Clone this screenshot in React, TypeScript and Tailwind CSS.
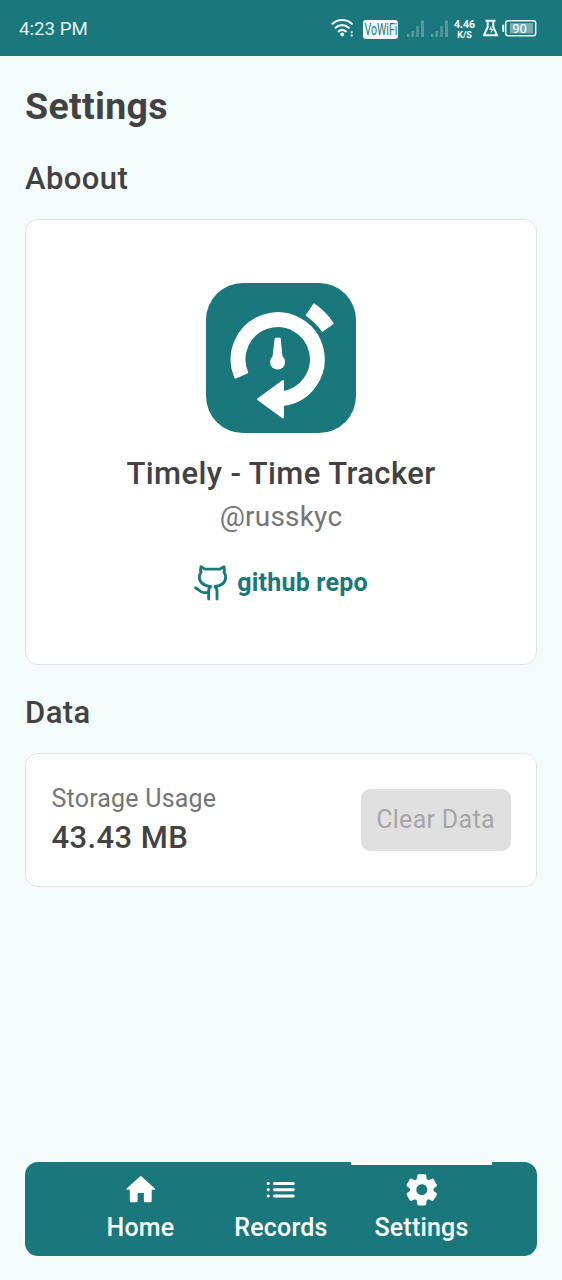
import React from "react";

const font = "font-['Roboto',sans-serif]";

function StatusBar() {
  return (
    <header className="flex h-14 shrink-0 items-center justify-between bg-[#1a787c] pl-[19px] pr-[25px] text-white">
      <span className="pt-px text-[18.7px] leading-6 text-[#e3f1f1]">4:23 PM</span>
      <div className="flex h-6 items-center">
        <svg width="24" height="24" viewBox="331 16 24 24" fill="none" stroke="#f2f8f8" strokeWidth="2.2" strokeLinecap="round">
          <path d="M332.500 23.700a14.500 14.500 0 0 1 19.300 0M335.500 27.700a10 10 0 0 1 13.300 0M338.700 31.300a5.500 5.500 0 0 1 7 0" />
          <circle cx="342.200" cy="34.500" r="1.900" fill="#f2f8f8" stroke="none" />
          <path d="M350.700 31.200h2v2h-2zM350.700 34.500h2v2h-2z" fill="#d5e8e8" stroke="none" />
        </svg>
        <span className="ml-2 mt-0.5 flex h-[19px] w-[35px] items-center justify-center rounded-[3px] bg-[#f5fbfb] text-[#1a787c]">
          <span className="scale-x-[0.66] text-[16px] leading-[19px]">VoWiFi</span>
        </span>
        <svg className="ml-2" width="44" height="24" viewBox="406 16 44 24" fill="#58999c">
          <path d="M407 34h2.500v3H407zM411.500 31h2.500v6h-2.500zM416.300 26h2.500v11h-2.500zM421 20.500h3v16.500h-3z" />
          <path d="M431 34h2.500v3H431zM435.500 31h2.500v6h-2.500zM440.300 26h2.500v11h-2.500zM445 20.500h3v16.500h-3z" />
        </svg>
        <span className="ml-1 flex w-[21px] flex-col items-center pt-0.5 font-bold">
          <span className="text-[10.500px] leading-[11px]">4.46</span>
          <span className="text-[9px] leading-[10px]">K/S</span>
        </span>
        <svg className="ml-2" width="54" height="24" viewBox="483 16 54 24" fill="none" stroke="#f2f8f8">
          <path d="M485.500 20.800h10M487.700 21v6l-3.700 8.300h13l-3.700-8.300v-6" strokeWidth="2" />
          <path d="M491.200 25.500l-2.200 4.300h2.500l-1 4 3.500-5h-2.700z" fill="#f2f8f8" stroke="none" />
          <rect x="505.700" y="20.700" width="30" height="15" rx="2.500" strokeWidth="1.500" />
          <path d="M503.200 25.500v5.500" strokeWidth="2" strokeLinecap="round" />
          <rect x="510" y="23" width="23" height="10.500" fill="#76acae" stroke="none" />
          <text x="519.500" y="33" fill="#fff" stroke="none" fontSize="13" textAnchor="middle">90</text>
        </svg>
      </div>
    </header>
  );
}

function AppLogo() {
  return (
    <svg width="150" height="150" viewBox="0 0 150 150">
      <rect width="150" height="150" rx="37" fill="#1a787c" />
      <path d="M35.500 92.300A39.600 39.600 0 1 1 77 115.500" fill="none" stroke="#fff" strokeWidth="14.800" />
      <path d="M29.400 94.500L41 89.500" stroke="#fff" strokeWidth="2" strokeLinecap="round" />
      <path d="M77 98v36.500L52 116.300z" fill="#fff" stroke="#fff" strokeWidth="2" strokeLinejoin="round" />
      <path d="M108 21.200Q119 28.500 127 40.500L116.500 48Q110 39 100.500 32.500z" fill="#fff" stroke="#fff" strokeWidth="1.500" strokeLinejoin="round" />
      <path d="M69.200 55.200h5L76 74h-9z" fill="#fff" stroke="#fff" strokeLinejoin="round" />
      <circle cx="71.600" cy="79" r="7.600" fill="#fff" />
    </svg>
  );
}

function GithubIcon() {
  return (
    <svg width="36" height="38" viewBox="13 12 108 114" fill="none" stroke="#1a787c" strokeWidth="8.500" strokeLinecap="round" strokeLinejoin="round">
      <path d="M57 117V93q0-9 6-13.500C43 77 29 67 29 50q0-7 5-12.500-3-8.500 0-17.500l12 7.500h44l13-7.500q3 9 0 17.500 5 5.500 5 12.500c0 17-12 27-32 29.500q6 4.500 6 13.500v24" />
      <path d="M18 84C27 86 30 98 43 98h14" />
    </svg>
  );
}

const homePath = "M10 19v-5h4v5c0 .55.45 1 1 1h3c.55 0 1-.45 1-1v-7h1.7c.46 0 .68-.57.33-.87L12.67 3.6c-.38-.34-.96-.34-1.34 0l-8.36 7.53c-.34.3-.13.87.33.87H5v7c0 .55.45 1 1 1h3c.55 0 1-.45 1-1z";
const listPath = "M4 13c.55 0 1-.45 1-1s-.45-1-1-1-1 .45-1 1 .45 1 1 1zm0 4c.55 0 1-.45 1-1s-.45-1-1-1-1 .45-1 1 .45 1 1 1zm0-8c.55 0 1-.45 1-1s-.45-1-1-1-1 .45-1 1 .45 1 1 1zm4 4h12c.55 0 1-.45 1-1s-.45-1-1-1H8c-.55 0-1 .45-1 1s.45 1 1 1zm0 4h12c.55 0 1-.45 1-1s-.45-1-1-1H8c-.55 0-1 .45-1 1s.45 1 1 1zM7 8c0 .55.45 1 1 1h12c.55 0 1-.45 1-1s-.45-1-1-1H8c-.55 0-1 .45-1 1z";
const gearPath = "M19.500 12c0-.23-.01-.45-.03-.68l1.860-1.410c.4-.3.51-.86.26-1.300l-1.870-3.230c-.25-.44-.79-.62-1.250-.42l-2.150.91c-.37-.26-.76-.49-1.170-.68l-.29-2.310c-.06-.5-.49-.88-.99-.88h-3.730c-.51 0-.94.38-1 .88l-.29 2.310c-.41.19-.8.42-1.170.68l-2.150-.91c-.46-.2-1-.02-1.250.42L2.410 8.620c-.25.44-.14.99.26 1.300l1.860 1.410c-.02.22-.03.44-.03.67s.01.45.03.68l-1.860 1.410c-.4.3-.51.86-.26 1.300l1.870 3.230c.25.44.79.62 1.250.42l2.150-.91c.37.26.76.49 1.170.68l.29 2.310c.06.5.49.88.99.88h3.730c.5 0 .93-.38.99-.88l.29-2.310c.41-.19.8-.42 1.170-.68l2.150.91c.46.2 1 .02 1.250-.42l1.870-3.230c.25-.44.14-.99-.26-1.300l-1.860-1.410c.03-.23.04-.45.04-.68zm-7.460 3.500c-1.930 0-3.500-1.570-3.500-3.500s1.570-3.500 3.500-3.500 3.500 1.570 3.500 3.500-1.570 3.500-3.500 3.500z";

function NavItem({ label, path, active }: { label: string; path: string; active?: boolean }) {
  return (
    <button className={`flex h-full w-[140.5px] flex-col items-center border-t-[3px] pt-[6px] text-white ${active ? "border-white" : "border-transparent"}`}>
      <svg width="37.5" height="37.5" viewBox="0 0 24 24" fill="currentColor">
        <path d={path} />
      </svg>
      <span className="mt-px text-[25px] font-medium leading-9 tracking-[0.2px]">{label}</span>
    </button>
  );
}

export default function App() {
  return (
    <div className={`flex h-[1280px] w-[562px] flex-col bg-[#f4fbfb] text-[#424242] ${font}`}>
      <StatusBar />
      <main className="flex flex-1 flex-col px-[25px] pt-[26px]">
        <h1 className="text-[37.5px] font-bold leading-[48px] tracking-[0.3px]">Settings</h1>
        <h2 className="mt-[25px] text-[31px] font-medium leading-[48px] tracking-[0.4px]">Aboout</h2>
        <section className="mt-4 flex h-[446px] flex-col items-center rounded-[13px] border border-[#e2e6e6] bg-white pt-[62.500px]">
          <AppLogo />
          <h3 className="mt-[18px] text-[31px] font-medium leading-[46px] tracking-[0.400px]">Timely - Time Tracker</h3>
          <p className="text-[28px] leading-[40px] tracking-[0.2px] text-[#757575]">@russkyc</p>
          <a className="mt-[27px] flex h-[38px] items-center gap-[7px] text-[25px] font-bold text-[#1a787c]">
            <GithubIcon />
            <span className="tracking-[0.200px]">github repo</span>
          </a>
        </section>
        <h2 className="mt-6 text-[31px] font-medium leading-[48px] tracking-[0.4px]">Data</h2>
        <section className="mt-4 flex h-[134px] items-center justify-between rounded-[13px] border border-[#e2e6e6] bg-white px-[25.500px]">
          <div className="flex flex-col pb-px">
            <span className="text-[25px] leading-[37px] tracking-[0.2px] text-[#757575]">Storage Usage</span>
            <span className="text-[31px] font-medium leading-[42px] tracking-[0.4px]">43.43 MB</span>
          </div>
          <button className="h-[62px] w-[150px] rounded-[9px] bg-[#e0e0e0] text-[25px] tracking-[0.3px] text-[#a6a6a6]">Clear Data</button>
        </section>
      </main>
      <nav className="mx-[25px] mb-[24.500px] flex h-[93.500px] justify-center rounded-[13px] bg-[#1a787c]">
        <NavItem label="Home" path={homePath} />
        <NavItem label="Records" path={listPath} />
        <NavItem label="Settings" path={gearPath} active />
      </nav>
    </div>
  );
}
